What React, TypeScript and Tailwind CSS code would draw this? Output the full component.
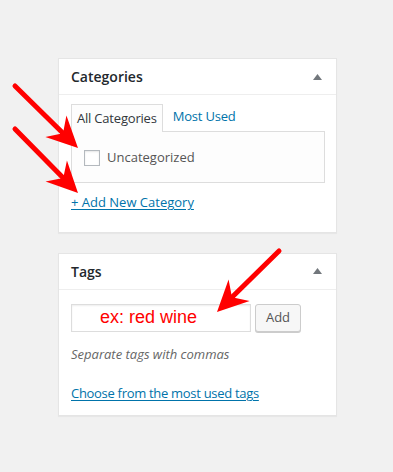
function Arrow({ x1, y1, x2, y2 }: { x1: number; y1: number; x2: number; y2: number }) {
  const dx = x2 - x1;
  const dy = y2 - y1;
  const len = Math.sqrt(dx * dx + dy * dy);
  const ux = dx / len;
  const uy = dy / len;
  const bx = x2 - ux * 31;
  const by = y2 - uy * 31;
  const nx = x2 - ux * 21;
  const ny = y2 - uy * 21;
  const px = -uy * 15;
  const py = ux * 15;
  return (
    <g fill="#ff0000" stroke="#ff0000">
      <line x1={x1} y1={y1} x2={nx} y2={ny} strokeWidth={5} strokeLinecap="round" />
      <polygon
        stroke="none"
        points={`${x2},${y2} ${bx + px},${by + py} ${nx},${ny} ${bx - px},${by - py}`}
      />
    </g>
  );
}

function Toggle() {
  return (
    <svg width="9" height="6" viewBox="0 0 9 6" className="text-[#72777c]">
      <path d="M4.5 0 L9 6 L0 6 Z" fill="currentColor" />
    </svg>
  );
}

function Box({ title, children }: { title: string; children: React.ReactNode }) {
  return (
    <div className="w-[279px] border border-[#e5e5e5] bg-white shadow-[0_1px_1px_rgba(0,0,0,0.04)]">
      <div className="flex h-[36px] items-center justify-between border-b border-[#eee] pl-3 pr-[14px]">
        <h2 className="text-[14px] font-semibold text-[#23282d]">{title}</h2>
        <Toggle />
      </div>
      {children}
    </div>
  );
}

export default function App() {
  return (
    <div
      className="relative h-[472px] w-[393px] overflow-hidden bg-[#f1f1f1] pl-[58px] pt-[58px] text-[13px] text-[#444]"
      style={{ fontFamily: '"Open Sans", "Noto Sans", sans-serif' }}
    >
      <Box title="Categories">
        <div className="px-3 pb-[19px] pt-2">
          <div className="flex items-end">
            <div className="relative -mb-px flex h-[28px] items-center border border-b-0 border-[#ddd] bg-[#fdfdfd] px-[5px] tracking-[-0.2px] text-[#32373c]">
              All Categories
            </div>
            <div className="flex h-[28px] items-center px-[10px] tracking-[-0.2px] text-[#0073aa]">Most Used</div>
          </div>
          <div className="h-[52px] w-[254px] border border-[#ddd] bg-[#fdfdfd] pl-3 pt-[16px]">
            <label className="flex items-center gap-[7px] text-[#555]">
              <span className="h-4 w-4 border border-[#b4b9be] bg-white shadow-[inset_0_1px_2px_rgba(0,0,0,0.1)]" />
              Uncategorized
            </label>
          </div>
          <a className="mt-[10px] block text-[#0073aa] underline underline-offset-[2px]">+ Add New Category</a>
        </div>
      </Box>

      <div className="mt-[20px]">
        <Box title="Tags">
          <div className="px-3 pb-[11px] pt-[14px]">
            <div className="flex items-center gap-1">
              <div
                className="flex h-[28px] w-[180px] items-center border border-[#ddd] bg-white pl-[28px] text-[18px] text-[#ff0000] shadow-[inset_0_1px_2px_rgba(0,0,0,0.07)]"
                style={{ fontFamily: '"Liberation Sans", Arial, sans-serif' }}
              >
                ex: red wine
              </div>
              <button className="h-[28px] w-[46px] rounded-[3px] border border-[#ccc] bg-[#f7f7f7] text-[#555] shadow-[0_1px_0_#ccc]">
                Add
              </button>
            </div>
            <p className="mt-[13px] italic text-[#666]">Separate tags with commas</p>
            <a className="mt-[20px] block tracking-[-0.3px] text-[#0073aa] underline underline-offset-[2px]">
              Choose from the most used tags
            </a>
          </div>
        </Box>
      </div>

      <svg className="pointer-events-none absolute left-0 top-0" width="393" height="472">
        <Arrow x1={15} y1={86} x2={78} y2={148} />
        <Arrow x1={15} y1={129} x2={78} y2={193} />
        <Arrow x1={279} y1={251} x2={217} y2={312} />
      </svg>
    </div>
  );
}
